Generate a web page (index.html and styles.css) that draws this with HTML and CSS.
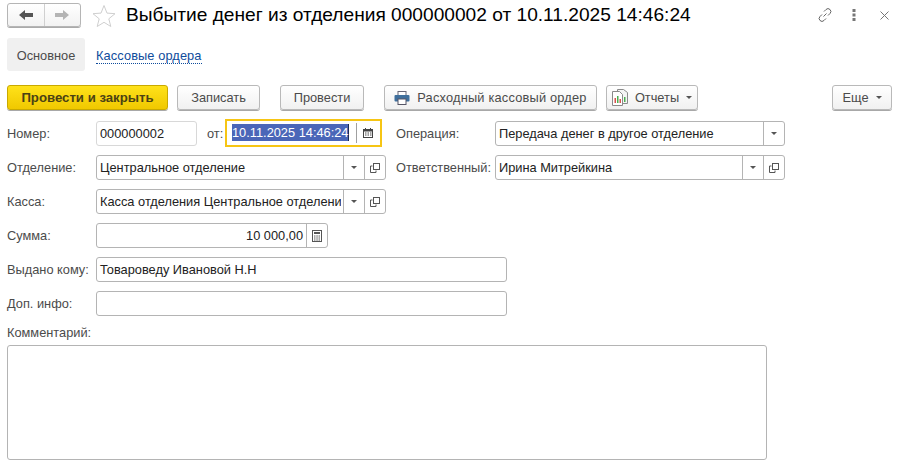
FILE: index.html
```html
<!DOCTYPE html>
<html lang="ru">
<head>
<meta charset="utf-8">
<title>Выбытие денег из отделения</title>
<link rel="stylesheet" href="styles.css">
</head>
<body>
<div class="page">
  <header class="titlebar">
    <div class="nav">
      <span class="nav-btn"><svg width="16" height="12" viewBox="0 0 16 12"><path d="M1 6l6-5v3h8v4H7v3z" fill="#555"/></svg></span>
      <span class="nav-btn"><svg width="16" height="12" viewBox="0 0 16 12"><path d="M15 6L9 1v3H1v4h8v3z" fill="#b4b4b4"/></svg></span>
    </div>
    <svg class="star" width="24" height="23" viewBox="0 0 24 23"><path d="M12 1.500l3 7.600 8 .6-6.200 5.100 2 7.700L12 18.300 5.200 22.500l2-7.700L1 9.700l8-.6z" fill="#fff" stroke="#cfcfcf"/></svg>
    <h1 class="title">Выбытие денег из отделения 000000002 от 10.11.2025 14:46:24</h1>
    <div class="win-tools">
      <svg class="tool-link" width="16" height="16" viewBox="0 0 16 16" fill="none" stroke="#666" stroke-width="1"><path d="M6.500 9.500l3-3M7 4.500l2-2a2.800 2.800 0 0 1 4 4l-2 2M9 11.500l-2 2a2.800 2.800 0 0 1-4-4l2-2"/></svg>
      <svg class="tool-more" width="4" height="14" viewBox="0 0 4 14" fill="#777"><rect x="0.500" y="1" width="3" height="3"/><rect x="0.500" y="5.500" width="3" height="3"/><rect x="0.500" y="10" width="3" height="3"/></svg>
      <svg class="tool-close" width="9" height="9" viewBox="0 0 9 9" stroke="#777" fill="none"><path d="M.5.500l8 8M8.500.500l-8 8"/></svg>
    </div>
  </header>

  <nav class="tabs">
    <span class="tab">Основное</span>
    <a class="tab-link" href="#">Кассовые ордера</a>
  </nav>

  <div class="toolbar">
    <button class="btn btn-primary w-post-close">Провести и закрыть</button>
    <button class="btn w-save">Записать</button>
    <button class="btn w-post">Провести</button>
    <button class="btn w-order">
      <svg width="16" height="14" viewBox="0 0 16 14"><rect x="4" y="0.500" width="8" height="4" fill="#fff" stroke="#667"/><rect x="0.500" y="4" width="15" height="6.500" rx="1" fill="#3f6f9c"/><rect x="4" y="8" width="8" height="5.500" fill="#fff" stroke="#556"/></svg>
      <span class="spaced">Расходный кассовый ордер</span>
    </button>
    <button class="btn w-reports">
      <svg width="16" height="17" viewBox="0 0 16 17"><path d="M5.500 .5h6l4 3v11h-10z" fill="#f4f4f4" stroke="#8a8a8a"/><path d="M.5 2.500h7l3 3v11H.5z" fill="#fff" stroke="#8a8a8a"/><rect x="2.500" y="9" width="1.500" height="5" fill="#d9534f"/><rect x="5" y="7" width="1.500" height="7" fill="#4caf50"/><rect x="7.500" y="10" width="1.500" height="4" fill="#d9534f"/><rect x="12" y="8" width="1.500" height="5" fill="#4caf50"/></svg>
      Отчеты <i class="caret"></i>
    </button>
    <button class="btn w-more">Еще <i class="caret"></i></button>
  </div>

  <form class="form">
    <div class="row">
      <div class="col-left">
        <label class="label">Номер:</label>
        <span class="field w-number"><span class="val">000000002</span></span>
        <label class="label-from">от:</label>
        <span class="field-focus">
          <span class="val"><span class="selected">10.11.2025 14:46:24</span></span>
          <span class="cell cell-focus"><svg width="10" height="10" viewBox="0 0 10 10"><path d="M2.500 0v2M7.500 0v2" stroke="#444"/><rect x="0.500" y="1.500" width="9" height="8" fill="#fff" stroke="#444"/><rect x="0" y="1" width="10" height="2.500" fill="#444"/><path d="M2 5h1.500M4.500 5H6M7 5h1.500M2 7h1.500M4.500 7H6M7 7h1.500" stroke="#444"/></svg></span>
        </span>
      </div>
      <div class="col-right">
        <label class="label label-right">Операция:</label>
        <span class="field w-right"><span class="val">Передача денег в другое отделение</span><span class="cell"><i class="caret"></i></span></span>
      </div>
    </div>

    <div class="row">
      <div class="col-left">
        <label class="label">Отделение:</label>
        <span class="field w-ref"><span class="val">Центральное отделение</span><span class="cell"><i class="caret"></i></span><span class="cell"><svg class="open" width="10" height="10" viewBox="0 0 10 10" fill="none" stroke="#555"><rect x="3.500" y="0.500" width="6" height="6"/><path d="M2.500 3H.5v6.500H6V7.500"/></svg></span></span>
      </div>
      <div class="col-right">
        <label class="label label-right">Ответственный:</label>
        <span class="field w-right"><span class="val">Ирина Митрейкина</span><span class="cell"><i class="caret"></i></span><span class="cell"><svg class="open" width="10" height="10" viewBox="0 0 10 10" fill="none" stroke="#555"><rect x="3.500" y="0.500" width="6" height="6"/><path d="M2.500 3H.5v6.500H6V7.500"/></svg></span></span>
      </div>
    </div>

    <div class="row">
      <div class="col-left">
        <label class="label">Касса:</label>
        <span class="field w-ref"><span class="val val-clip">Касса отделения Центральное отделение</span><span class="cell"><i class="caret"></i></span><span class="cell"><svg class="open" width="10" height="10" viewBox="0 0 10 10" fill="none" stroke="#555"><rect x="3.500" y="0.500" width="6" height="6"/><path d="M2.500 3H.5v6.500H6V7.500"/></svg></span></span>
      </div>
    </div>

    <div class="row">
      <div class="col-left">
        <label class="label">Сумма:</label>
        <span class="field w-sum"><span class="val val-num">10 000,00</span><span class="cell"><svg width="10" height="12" viewBox="0 0 10 12" fill="none" stroke="#555"><rect x="0.500" y="0.500" width="9" height="11"/><rect x="2" y="2" width="6" height="2" fill="#555" stroke="none"/><path d="M2 6h1.500M4.300 6h1.500M6.500 6H8M2 8h1.500M4.300 8h1.500M6.500 8H8M2 10h1.500M4.300 10h1.500M6.500 10H8"/></svg></span></span>
      </div>
    </div>

    <div class="row">
      <div class="col-left">
        <label class="label">Выдано кому:</label>
        <span class="field w-wide"><span class="val">Товароведу Ивановой Н.Н</span></span>
      </div>
    </div>

    <div class="row">
      <div class="col-left">
        <label class="label">Доп. инфо:</label>
        <span class="field w-wide"><span class="val"></span></span>
      </div>
    </div>

    <div class="comment">
      <label class="label">Комментарий:</label>
      <div class="textarea"></div>
    </div>
  </form>
</div>
</body>
</html>
```

FILE: styles.css
```css
* { box-sizing: border-box; }
html, body { margin: 0; padding: 0; background: #fff; overflow: hidden; }
body { font-family: "Liberation Sans", Arial, sans-serif; font-size: 12.8px; color: #4b4b4b; }
.page { width: 907px; height: 464px; padding: 3px 15px 0 7px; }

.titlebar { display: flex; align-items: center; height: 24px; }
.nav { display: flex; width: 74px; height: 24px; border: 1px solid #b5b5b5; border-radius: 3px; background: linear-gradient(#fff, #f2f2f2); box-shadow: 0 1px 0 #aaa; }
.nav-btn { flex: 1; display: flex; align-items: center; justify-content: center; }
.nav-btn + .nav-btn { border-left: 1px solid #d0d0d0; }
.star { margin-left: 11px; }
.title { margin: 0 0 0 10px; font-size: 19.15px; font-weight: 400; color: #000; white-space: nowrap; flex: 1; }
.win-tools { display: flex; align-items: center; margin-right: 3px; }
.tool-more { margin-left: 19px; }
.tool-close { margin-left: 24px; }

.tabs { display: flex; align-items: center; margin-top: 11px; height: 33px; }
.tab { width: 78px; height: 33px; padding-top: 1px; display: flex; align-items: center; justify-content: center; background: #f0f0f0; border-radius: 3px; }
.tab-link { margin: 3px 0 0 11px; color: #0f4c9c; letter-spacing: .1px; text-decoration: none; border-bottom: 1px dotted #0f4c9c; line-height: 14px; }

.toolbar { display: flex; margin-top: 14px; height: 25px; }
.btn { display: flex; align-items: center; justify-content: center; gap: 7px; height: 25px; padding: 0; font: inherit; color: #4b4b4b; background: linear-gradient(#fff, #f1f1f1); border: 1px solid #b9b9b9; border-radius: 3px; box-shadow: 0 1px 0 #a8a8a8; }
.btn-primary { background: linear-gradient(#ffe21a, #f0c800); border-color: #c9a900; font-weight: 700; font-size: 13.2px; color: #4a4214; }
.spaced { letter-spacing: .2px; }
.w-post-close { width: 161px; }
.w-save { width: 83px; margin-left: 9px; }
.w-post { width: 84px; margin-left: 20px; }
.w-order { width: 213px; margin-left: 20px; }
.w-reports { width: 92px; margin-left: 9px; }
.w-more { width: 60px; margin-left: auto; }
.caret { display: inline-block; border: 3px solid transparent; border-top: 3px solid #555; border-bottom: 0; }

.form { display: flex; flex-direction: column; gap: 9px; margin-top: 11px; }
.row { display: flex; height: 25px; align-items: center; }
.col-left { display: flex; align-items: center; width: 389px; flex: none; }
.col-right { display: flex; align-items: center; }
.label { width: 89px; flex: none; white-space: nowrap; }
.label-right { width: 99px; }
.label-from { width: 18px; flex: none; margin-left: 10px; }

.field { display: flex; flex: none; height: 25px; border: 1px solid #b4b4b4; border-radius: 3px; background: #fff; color: #222; overflow: hidden; }
.val { flex: 1; min-width: 0; padding-left: 3px; line-height: 23px; white-space: nowrap; overflow: hidden; }
.val-num { text-align: right; padding: 0 3px 0 0; }
.val-clip { margin-right: 2px; }
.cell { width: 21px; flex: none; display: flex; align-items: center; justify-content: center; border-left: 1px solid #b4b4b4; }
.w-number { width: 101px; border-color: #d8d8d8; }
.w-ref { width: 290px; }
.w-right { width: 290px; }
.w-sum { width: 232px; }
.w-wide { width: 411px; }

.field-focus { display: flex; flex: none; align-items: center; width: 157px; height: 28px; border: 2px solid #f6c514; background: #fff; margin-top: -1px; }
.field-focus .val { padding-left: 5px; line-height: 24px; }
.selected { background: #4a66b8; color: #fff; display: inline-block; height: 17px; line-height: 17px; border-right: 1px solid #1a2a50; }
.cell-focus { height: 20px; width: 24px; padding-right: 2px; border-left-color: #a0a0a0; }

.comment { display: flex; flex-direction: column; }
.comment .label { width: auto; line-height: 16px; }
.textarea { width: 760px; height: 115px; margin-top: 4px; border: 1px solid #b4b4b4; border-radius: 3px; }
```
